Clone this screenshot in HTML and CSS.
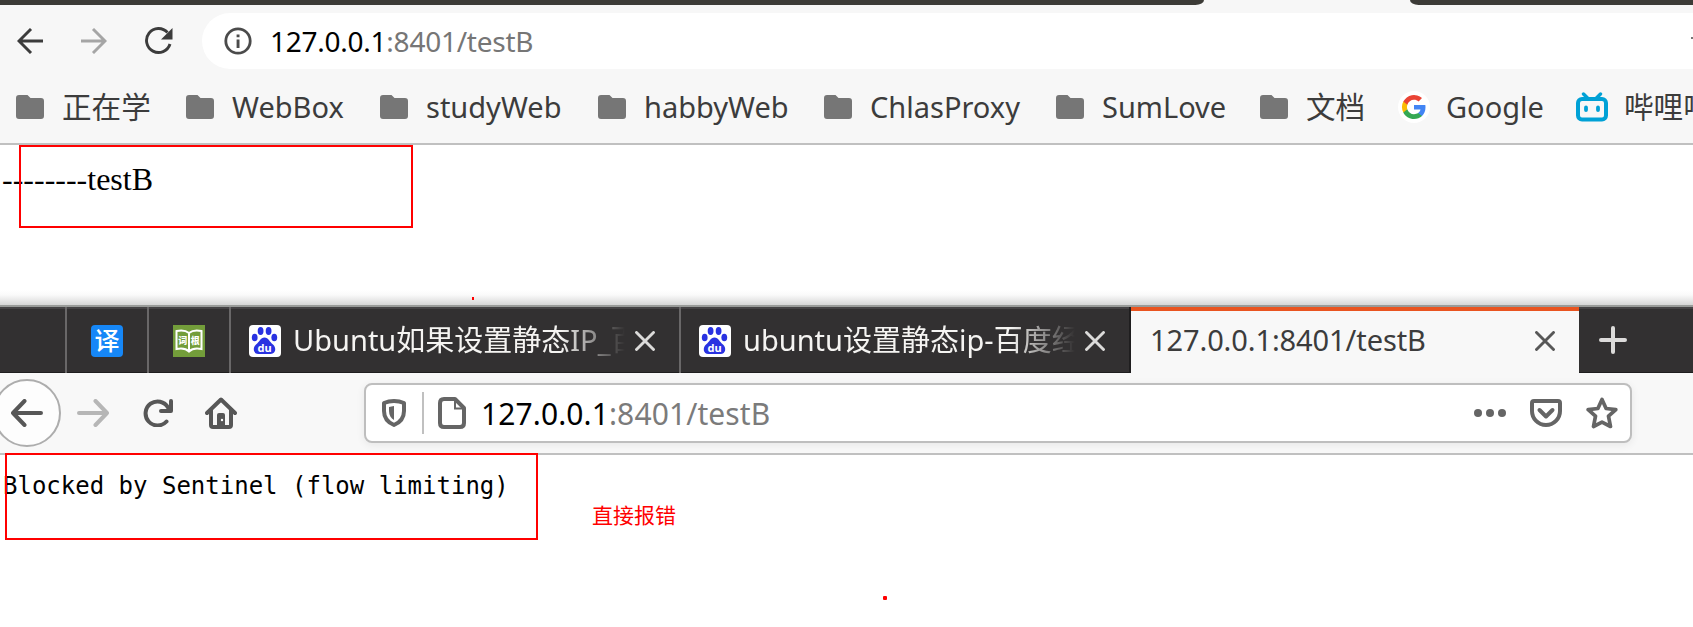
FILE: index.html
```html
<!DOCTYPE html>
<html lang="zh-CN">
<head>
<meta charset="utf-8">
<title>127.0.0.1:8401/testB</title>
<link rel="stylesheet" href="styles.css">
</head>
<body>
<svg class="defs" width="0" height="0">
  <symbol id="folder" viewBox="0 0 28 24"><path d="M3 0h8.5l3 3H25a3 3 0 0 1 3 3v15a3 3 0 0 1-3 3H3a3 3 0 0 1-3-3V3a3 3 0 0 1 3-3z" fill="#767676"/></symbol>
  <symbol id="close" viewBox="0 0 20 20"><path d="M1.500 1.500l17 17M18.500 1.500l-17 17" fill="none" stroke="currentColor" stroke-width="2.900" stroke-linecap="round"/></symbol>
  <symbol id="baidu" viewBox="0 0 32 32"><rect width="32" height="32" rx="4" fill="#fff"/><g fill="#2932e1"><ellipse cx="11.600" cy="6" rx="2.900" ry="4"/><ellipse cx="19.600" cy="6" rx="2.900" ry="4"/><ellipse cx="5.700" cy="12.500" rx="2.900" ry="3.800"/><ellipse cx="25.300" cy="12.500" rx="2.900" ry="3.800"/><path d="M15.500 12.500c4 0 5 4.500 8.500 7 3.500 3 3 9.500-2.500 9.500H9.500C4 29 3.500 22.500 7 19.500c3.500-2.500 4.500-7 8.500-7z"/></g><text x="15.500" y="26.500" text-anchor="middle" class="du">du</text></symbol>
</svg>

<section class="window chromium">
  <div class="strip"><i class="strip-left"></i><i class="strip-right"></i></div>
  <div class="navbar">
    <svg class="back" width="26" height="26" viewBox="0 0 26 26"><path d="M26 13H2M14 1L2 13l12 12" fill="none" stroke="#3c3c3c" stroke-width="2.900"/></svg>
    <svg class="forward" width="26" height="26" viewBox="0 0 26 26"><path d="M0 13h24M12 1l12 12-12 12" fill="none" stroke="#a5a5a5" stroke-width="2.900"/></svg>
    <svg class="reload" width="28" height="28" viewBox="0 0 28 28"><path d="M22.500 5.500A12 12 0 1 0 25 17" fill="none" stroke="#3c3c3c" stroke-width="2.900"/><path d="M27.500 1v11.500H16z" fill="#3c3c3c"/></svg>
    <div class="omnibox">
      <svg width="28" height="28" viewBox="0 0 28 28"><circle cx="14" cy="14" r="12.200" fill="none" stroke="#4b4b4b" stroke-width="2.800"/><path d="M12.600 12.500h2.900v8.500h-2.900zM12.600 7.500h2.900v2.700h-2.900z" fill="#4b4b4b"/></svg>
      <span class="url"><b>127.0.0.1</b>:8401/testB</span>
      <i class="star-edge"></i>
    </div>
  </div>
  <div class="bookmarks">
    <a class="bm bm-study"><svg width="28" height="24"><use href="#folder"/></svg><span class="han">正在学</span></a>
    <a class="bm bm-webbox"><svg width="28" height="24"><use href="#folder"/></svg><span>WebBox</span></a>
    <a class="bm bm-studyweb"><svg width="28" height="24"><use href="#folder"/></svg><span>studyWeb</span></a>
    <a class="bm bm-habby"><svg width="28" height="24"><use href="#folder"/></svg><span>habbyWeb</span></a>
    <a class="bm bm-proxy"><svg width="28" height="24"><use href="#folder"/></svg><span>ChlasProxy</span></a>
    <a class="bm bm-sum"><svg width="28" height="24"><use href="#folder"/></svg><span>SumLove</span></a>
    <a class="bm bm-docs"><svg width="28" height="24"><use href="#folder"/></svg><span class="han">文档</span></a>
    <a class="bm bm-google"><svg width="32" height="32" viewBox="0 0 32 32"><circle cx="16" cy="16" r="16" fill="#fff"/><g transform="translate(4 4)"><path fill="#4285f4" d="M23.500 12.300c0-.9-.1-1.500-.2-2.300H12v4.500h6.500c-.3 1.500-1.100 2.700-2.400 3.600v3h3.900c2.200-2.100 3.500-5.100 3.500-8.800z"/><path fill="#34a853" d="M12 24c3.200 0 6-1.100 8-2.900l-3.900-3c-1.100.7-2.500 1.200-4.100 1.200-3.100 0-5.800-2.100-6.700-5h-4v3.100C3.300 21.300 7.300 24 12 24z"/><path fill="#fbbc05" d="M5.300 14.300a7.100 7.100 0 0 1 0-4.600V6.600h-4a12 12 0 0 0 0 10.800z"/><path fill="#ea4335" d="M12 4.700c1.800 0 3.300.6 4.600 1.800L20 3.100A12 12 0 0 0 1.300 6.600l4 3.100c.9-2.900 3.600-5 6.700-5z"/></g></svg><span>Google</span></a>
    <a class="bm bm-bili"><svg width="32" height="30" viewBox="0 0 32 30"><g fill="none" stroke="#00a1d6" stroke-linecap="round"><rect x="2" y="7" width="28" height="20.500" rx="4" stroke-width="4"/><path d="M7.500 2l4 4M24.500 2l-4 4" stroke-width="3.400"/><path d="M10 15.500v2.500M22 15.500v2.500" stroke-width="3.800"/></g></svg><span class="han">哔哩哔哩</span></a>
  </div>
  <main class="page page-top">--------testB</main>
</section>

<section class="window firefox">
  <div class="tabs">
    <div class="tab tab-lead"></div>
    <div class="tab pinned"><svg width="32" height="32" viewBox="0 0 32 32"><rect width="32" height="32" rx="4" fill="#1687f7"/><text x="16" y="25" text-anchor="middle" class="yi">译</text></svg></div>
    <div class="tab pinned"><svg width="32" height="32" viewBox="0 0 32 32"><rect width="32" height="32" fill="#739d3a"/><path d="M16 8C13 5.500 8 5 3.500 6v18c4.500-1 9.500-.5 12.500 2.500 3-3 8-3.500 12.500-2.500V6C24 5 19 5.500 16 8zm0 0v18" fill="none" stroke="#fff" stroke-width="2"/><text x="9.700" y="19" text-anchor="middle" class="cg">词</text><text x="22.300" y="19" text-anchor="middle" class="cg">根</text></svg></div>
    <div class="tab wide"><svg width="32" height="32"><use href="#baidu"/></svg><span class="title title-a">Ubuntu如果设置静态IP_百度</span><svg class="x" width="20" height="20"><use href="#close"/></svg></div>
    <div class="tab wide second"><svg width="32" height="32"><use href="#baidu"/></svg><span class="title title-b">ubuntu设置静态ip-百度经验</span><svg class="x" width="20" height="20"><use href="#close"/></svg></div>
    <div class="tab active"><span class="title title-c">127.0.0.1:8401/testB</span><svg class="x" width="20" height="20"><use href="#close"/></svg></div>
    <div class="newtab"><svg width="28" height="28" viewBox="0 0 28 28"><path d="M14 2v24M2 14h24" stroke="#dcdbda" stroke-width="4" stroke-linecap="round"/></svg></div>
  </div>
  <div class="toolbar">
    <div class="round"><svg width="32" height="28" viewBox="0 0 32 28"><path d="M30 14H2M13.500 2L2 14l11.500 12" fill="none" stroke="#575757" stroke-width="4" stroke-linecap="round" stroke-linejoin="round"/></svg></div>
    <svg class="ff-forward" width="32" height="28" viewBox="0 0 32 28"><path d="M2 14h28M18.500 2L30 14 18.500 26" fill="none" stroke="#b6b6b6" stroke-width="4" stroke-linecap="round" stroke-linejoin="round"/></svg>
    <svg class="ff-reload" width="30" height="28" viewBox="0 0 30 28"><path d="M23.500 22.500A12 12 0 1 1 25 8.500" fill="none" stroke="#575757" stroke-width="4" stroke-linecap="round"/><path d="M28 2v10H18" fill="none" stroke="#575757" stroke-width="4" stroke-linecap="round" stroke-linejoin="round"/></svg>
    <svg class="ff-home" width="32" height="32" viewBox="0 0 32 32"><path d="M2 16L16 2.500 30 16M6 13.500V28q0 2 2 2h16q2 0 2-2V13.500" fill="none" stroke="#575757" stroke-width="4" stroke-linecap="round" stroke-linejoin="round"/><path d="M12 30V18q0-2 2-2h4q2 0 2 2v12z" fill="#575757"/><circle cx="17" cy="23" r="1.200" fill="#fff"/></svg>
    <div class="urlbar">
      <svg class="shield" width="24" height="28" viewBox="0 0 24 28"><path d="M12 2C8.500 2 5 2.700 2 4v8c0 7.500 4 11.500 10 14 6-2.500 10-6.500 10-14V4c-3-1.300-6.500-2-10-2z" fill="none" stroke="#656565" stroke-width="4" stroke-linejoin="round"/><path d="M12 7v14c-3-2-5-4.500-5-9V8z" fill="#656565"/></svg>
      <i class="divider"></i>
      <svg class="file" width="28" height="32" viewBox="0 0 28 32"><path d="M6 2h11l9 9v15q0 4-4 4H6q-4 0-4-4V6q0-4 4-4z" fill="none" stroke="#656565" stroke-width="4" stroke-linejoin="round"/><path d="M17 3v8.500h8" fill="none" stroke="#656565" stroke-width="2"/></svg>
      <span class="ff-url"><b>127.0.0.1</b>:8401/testB</span>
      <svg class="dots" width="32" height="8" viewBox="0 0 32 8"><g fill="#656565"><circle cx="4" cy="4" r="4"/><circle cx="16" cy="4" r="4"/><circle cx="28" cy="4" r="4"/></g></svg>
      <svg class="pocket" width="32" height="28" viewBox="0 0 32 28"><path d="M4 2h24q2 0 2 2v8a14 14 0 0 1-28 0V4q0-2 2-2z" fill="none" stroke="#656565" stroke-width="4"/><path d="M9.500 11l6.500 6.500 6.500-6.500" fill="none" stroke="#656565" stroke-width="4" stroke-linecap="round" stroke-linejoin="round"/></svg>
      <svg class="star" width="32" height="32" viewBox="0 0 32 32"><path d="M16 2.500l4.100 9 9.700 1.100-7.300 6.600 2 10.300-8.500-4.300-8.500 4.300 2-10.300-7.300-6.600 9.700-1.100z" fill="none" stroke="#656565" stroke-width="3.700" stroke-linejoin="round"/></svg>
    </div>
  </div>
  <main class="page page-bottom">Blocked by Sentinel (flow limiting)</main>
</section>

<i class="mark box-top"></i>
<i class="mark box-bottom"></i>
<i class="mark dot-top"></i>
<i class="mark dot-bottom"></i>
<span class="note">直接报错</span>
</body>
</html>
```

FILE: styles.css
```css
* { box-sizing: border-box; }
body {
  position: relative;
  width: 1693px;
  height: 627px;
  margin: 0;
  overflow: hidden;
  background: #fff;
  font-family: "Noto Sans", "Noto Sans CJK SC", sans-serif;
  color: #3c3c3c;
}
svg { display: block; flex: none; }
b { font-weight: 400; color: #000; }
.defs { position: absolute; }
.du { font: 700 11px "Noto Sans", sans-serif; fill: #fff; }
.yi { font: 500 25px "Noto Sans CJK SC", sans-serif; fill: #fff; }
.cg { font: 900 9px "Noto Sans CJK SC", sans-serif; fill: #fff; }

/* upper browser */
.chromium { height: 290px; }
.strip { display: flex; justify-content: space-between; height: 5px; background: #f7f7f7; overflow: hidden; }
.strip i { height: 5px; background: #3c3b37; }
.strip-left { width: 1204px; border-bottom-right-radius: 12px 7px; }
.strip-right { width: 283px; border-bottom-left-radius: 12px 7px; }
.navbar { display: flex; align-items: center; height: 72px; padding-left: 17px; background: #f7f7f7; }
.forward { margin-left: 38px; }
.reload { margin-left: 38px; }
.omnibox { display: flex; align-items: center; flex: 1; height: 56px; margin-left: 29px; padding-left: 22px; border-radius: 28px 0 0 28px; background: #fff; }
.url { margin-left: 18px; font-size: 28px; line-height: 56px; letter-spacing: -0.25px; white-space: nowrap; color: #767676; }
.star-edge { width: 2px; height: 2px; margin: -6px 0 0 auto; background: #767676; }
.bookmarks { display: flex; align-items: center; height: 68px; padding: 0 0 6px 16px; border-bottom: 2px solid #c0c0c0; background: #f7f7f7; overflow: hidden; }
.bm { display: flex; align-items: center; flex: none; height: 60px; font-size: 29px; line-height: 60px; white-space: nowrap; }
.bm span { margin-left: 18px; }
.bm .han { font-size: 29.600px; }
.bm-study { width: 170px; }
.bm-webbox { width: 194px; }
.bm-studyweb { width: 218px; }
.bm-habby { width: 226px; }
.bm-proxy { width: 232px; }
.bm-sum { width: 204px; }
.bm-docs { width: 138px; }
.bm-google { width: 178px; }
.bm-google span, .bm-bili span { margin-left: 16px; }
.page-top { height: 145px; padding: 16px 0 0 2px; font: 32px/36px "Liberation Serif", serif; color: #000; }

/* lower browser */
.firefox { padding-top: 15px; background: linear-gradient(#fff, #fafafa 5px, #d6d6d6 15px, #fff 15px); }
.tabs { display: flex; height: 68px; border-top: 2px solid #999b99; background: #323031; box-shadow: inset 0 2px #454345, inset 0 -1px #1f1e1f; }
.tab { display: flex; align-items: center; border-right: 2px solid #696768; color: #f5f4f2; }
.tab-lead { width: 67px; }
.pinned { width: 82px; padding-left: 24px; padding-top: 2px; }
.wide { width: 450px; padding: 2px 24px 0 18px; }
.second { border-right-color: #1f1e1f; }
.wide .x { margin-left: auto; color: #dcdbda; }
.title { font-size: 29px; line-height: 60px; padding-bottom: 2px; white-space: nowrap; overflow: hidden; }
.wide .title { width: 332px; margin-left: 12px; -webkit-mask-image: linear-gradient(90deg, #000 268px, transparent 332px); mask-image: linear-gradient(90deg, #000 268px, transparent 332px); }
.active { width: 448px; padding: 0 24px 2px 19px; border-right: 0; border-top: 4px solid #e95420; background: #f8f8f8; color: #3c3c3c; }
.active .title { letter-spacing: -0.1px; }
.active .x { margin-left: auto; color: #575757; }
.newtab { display: flex; align-items: center; padding-left: 20px; }
.toolbar { display: flex; align-items: center; height: 82px; border-bottom: 2px solid #c0c0c0; background: #f8f8f8; }
.round { display: flex; align-items: center; justify-content: center; width: 68px; height: 68px; margin-left: -7px; border: 2px solid #adadad; border-radius: 50%; background: #fdfdfd; flex: none; }
.ff-forward { margin-left: 16px; }
.ff-reload { margin-left: 34px; }
.ff-home { margin-left: 32px; }
.urlbar { display: flex; align-items: center; width: 1268px; height: 60px; margin-left: 127px; padding: 0 12px 0 16px; border: 2px solid #bebebe; border-radius: 8px; background: #fff; box-shadow: 0 2px 8px rgba(0,0,0,.07); }
.divider { width: 2px; height: 42px; margin: 0 14px 0 16px; background: #c0c0c0; }
.ff-url { margin-left: 15px; padding-top: 2px; font-size: 30px; line-height: 54px; letter-spacing: 0.1px; white-space: nowrap; color: #7b7b7b; }
.dots { margin-left: auto; }
.pocket, .star { margin-left: 24px; }
.page-bottom { padding: 14px 0 0 3px; font: 24px/34px "DejaVu Sans Mono", monospace; color: #000; white-space: nowrap; }

/* annotations */
.mark { position: absolute; }
.box-top { left: 19px; top: 145px; width: 394px; height: 83px; border: 2px solid #f00; }
.box-bottom { left: 5px; top: 453px; width: 533px; height: 87px; border: 2px solid #f00; }
.dot-top { left: 472px; top: 297px; width: 2px; height: 3px; background: #f00; }
.dot-bottom { left: 883px; top: 596px; width: 4px; height: 4px; border-radius: 1px; background: #f00; }
.note { position: absolute; left: 592px; top: 498px; font: 21px/32px "Noto Sans CJK SC", sans-serif; color: #f00; }
```
